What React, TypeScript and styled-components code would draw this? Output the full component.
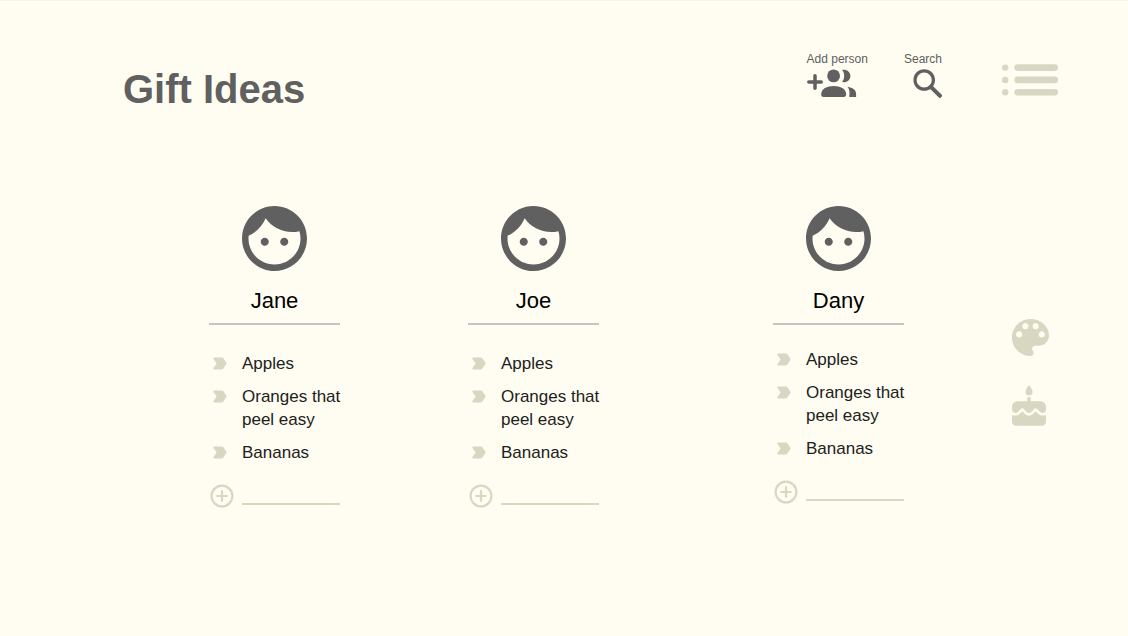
import React from 'react';
import styled, { createGlobalStyle } from 'styled-components';

const colors = {
  paper: '#fffdf1',
  edge: '#f7f5ea',
  ink: '#606060',
  soft: '#d8d8c2',
  rule: '#c4c4c4',
};

const GlobalStyle = createGlobalStyle`
  * { box-sizing: border-box; }
  body {
    margin: 0;
    background: ${colors.paper};
    font-family: "Liberation Sans", Arial, sans-serif;
  }
`;

const Page = styled.div`
  min-height: 100vh;
  border-top: 1px solid ${colors.edge};
  background: ${colors.paper};
`;

const Header = styled.header`
  display: flex;
  justify-content: space-between;
  align-items: flex-start;
  padding: 51px 70px 0 123px;
`;

const Title = styled.h1`
  margin: 14px 0 1px;
  font-size: 40px;
  line-height: 46px;
  font-weight: 700;
  color: ${colors.ink};
`;

const Toolbar = styled.nav`
  display: flex;
  align-items: flex-start;
  gap: 36px;
`;

const PlainButton = styled.button`
  display: block;
  padding: 0;
  border: 0;
  background: none;
  color: ${colors.soft};
  font: inherit;
  cursor: pointer;
  svg { display: block; }
`;

const ToolButton = styled(PlainButton)<{ $align: string }>`
  display: flex;
  flex-direction: column;
  align-items: ${(p) => p.$align};
  gap: 3px;
  color: ${colors.ink};
  font-size: 12px;
  line-height: 14px;
`;

const MenuButton = styled(PlainButton)`
  margin: 12px 0 0 24px;
`;

const Main = styled.main`
  display: grid;
  grid-template-columns: 259fr 305fr 239fr 116fr;
  align-items: start;
  padding: 93px 0 40px 209px;
`;

const Card = styled.section`
  width: 131px;
`;

const CardHead = styled.div`
  display: flex;
  flex-direction: column;
  align-items: center;
  gap: 17px;
  padding-bottom: 9px;
  border-bottom: 2px solid ${colors.rule};
  color: ${colors.ink};
`;

const Name = styled.h2`
  margin: 0;
  font-size: 22px;
  line-height: 26px;
  font-weight: 400;
  color: #000;
`;

const Ideas = styled.ul<{ $compact?: boolean }>`
  display: flex;
  flex-direction: column;
  gap: 10px;
  margin: ${(p) => (p.$compact ? 23 : 27)}px 0 0;
  padding: 0 0 0 4px;
  list-style: none;
`;

const Idea = styled.li`
  display: flex;
  align-items: flex-start;
  gap: 15px;
  font-size: 17px;
  line-height: 23px;
  color: #212121;
  svg {
    flex: none;
    margin-top: 5px;
    color: ${colors.soft};
  }
`;

const IdeaText = styled.span`
  flex: none;
  width: 104px;
`;

const AddRow = styled.form`
  display: flex;
  align-items: center;
  gap: 8px;
  margin-top: 20px;
  padding-left: 1px;
`;

const AddInput = styled.input`
  flex: 1;
  min-width: 0;
  height: 18px;
  padding: 0;
  border: 0;
  border-bottom: 2px solid ${colors.soft};
  border-radius: 0;
  outline: 0;
  background: none;
  font: inherit;
`;

const SideTools = styled.aside`
  display: flex;
  flex-direction: column;
  align-items: flex-start;
  gap: 29px;
  padding-top: 113px;
`;

const GroupAddIcon = () => (
  <svg width="50" height="28" viewBox="0 0 50 28" fill="currentColor" aria-hidden="true">
    <path d="M8 6.800v12.400M1.800 13h12.400" stroke="currentColor" strokeWidth="3.500" strokeLinecap="round" />
    <circle cx="26.600" cy="6.900" r="6.400" />
    <path d="M14.200 25.200c0-5.500 5.800-8.300 12.500-8.300s12.400 2.800 12.400 8.300c0 1.700-.8 2.800-2.200 2.800H16.400c-1.400 0-2.200-1.100-2.200-2.800z" />
    <path d="M35 .8c4.600-.9 8.400 2 8.400 6.100s-3.800 7-8.400 6.100c2.900-3.300 2.900-8.900 0-12.200z" />
    <path d="M40.400 17.700c5.400.8 8.700 3.300 8.700 7V28h-6.900c.6-4.400.6-7.300-1.800-10.300z" />
  </svg>
);

const SearchIcon = () => (
  <svg width="29" height="29" viewBox="0 0 29 29" fill="none" stroke="currentColor" aria-hidden="true">
    <circle cx="11.200" cy="11" r="9.200" strokeWidth="3.200" />
    <path d="M18 18l8.800 8.600" strokeWidth="4" strokeLinecap="square" />
  </svg>
);

const MenuIcon = () => (
  <svg width="56" height="32" viewBox="0 0 56 32" fill="currentColor" aria-hidden="true">
    {[3.6, 15.9, 28.2].map((y) => (
      <g key={y}>
        <circle cx="3.200" cy={y} r="3.200" />
        <rect x="12.400" y={y - 3.3} width="43.600" height="6.600" rx="3.300" />
      </g>
    ))}
  </svg>
);

const FaceIcon = () => (
  <svg width="65" height="65" viewBox="2 2 20 20" fill="currentColor" aria-hidden="true">
    <path d="M9 11.750c-.69 0-1.250.56-1.250 1.250s.56 1.250 1.250 1.250 1.250-.56 1.250-1.250-.56-1.250-1.250-1.250zm6 0c-.69 0-1.250.56-1.250 1.250s.56 1.250 1.250 1.250 1.250-.56 1.250-1.250-.56-1.250-1.250-1.250zM12 2C6.480 2 2 6.480 2 12s4.480 10 10 10 10-4.480 10-10S17.520 2 12 2zm0 18c-4.410 0-8-3.590-8-8 0-.29.02-.58.05-.86 2.360-1.050 4.230-2.980 5.210-5.370C11.070 8.330 14.050 10 17.420 10c.78 0 1.530-.09 2.250-.26.21.71.33 1.470.33 2.260 0 4.410-3.590 8-8 8z" />
  </svg>
);

const BulletIcon = () => (
  <svg width="14" height="13" viewBox="0 0 14 13" fill="currentColor" aria-hidden="true">
    <path d="M1.300.5h7.500c.7 0 1.200.3 1.600.8l3 4.500c.3.400.3.900 0 1.300l-3 4.500c-.4.500-.9.800-1.600.8H1.300c-.9 0-1.300-.8-.8-1.500L3.600 6.500.5 2C0 1.300.4.500 1.300.5z" />
  </svg>
);

const PlusIcon = () => (
  <svg width="24" height="24" viewBox="0 0 24 24" fill="none" stroke="currentColor" strokeWidth="2.200" strokeLinecap="round" aria-hidden="true">
    <circle cx="12" cy="12" r="10.400" />
    <path d="M12 7.200v9.600M7.200 12h9.600" />
  </svg>
);

const PaletteIcon = () => (
  <svg width="37" height="37" viewBox="3 3 18 18" fill="currentColor" aria-hidden="true">
    <path d="M12 3c-4.970 0-9 4.030-9 9s4.030 9 9 9c.83 0 1.500-.67 1.500-1.500 0-.39-.15-.74-.39-1.010-.23-.26-.38-.61-.38-.99 0-.83.67-1.500 1.500-1.500H16c2.760 0 5-2.240 5-5 0-4.420-4.030-8-9-8zm-5.500 9c-.83 0-1.500-.67-1.500-1.500S5.670 9 6.500 9 8 9.670 8 10.500 7.330 12 6.500 12zm3-4C8.670 8 8 7.330 8 6.500S8.670 5 9.500 5s1.500.67 1.500 1.500S10.330 8 9.500 8zm5 0c-.83 0-1.500-.67-1.500-1.500S13.670 5 14.500 5s1.500.67 1.500 1.500S15.330 8 14.500 8zm3 4c-.83 0-1.500-.67-1.500-1.500S16.670 9 17.500 9s1.500.67 1.500 1.500-.67 1.500-1.500 1.500z" />
  </svg>
);

const CakeIcon = () => (
  <svg width="34" height="41" viewBox="0 0 34 41" fill="currentColor" aria-hidden="true">
    <path d="M17 0c1.400 2 3.600 4.600 3.600 7 0 2-1.600 3.500-3.600 3.500S13.400 9 13.400 7c0-2.400 2.200-5 3.600-7z" />
    <path d="M15.300 16.200v-2.400c0-1 .7-1.700 1.700-1.700s1.700.7 1.700 1.700v2.400H28c3.700 0 6 2.300 6 5.700v2.500c0 2-1.600 3.500-3.500 3.500-1 0-1.900-.4-2.600-1.100l-3-3c-.8-.8-1.800-.8-2.600 0l-2.700 2.900c-1.500 1.600-3.700 1.600-5.200 0l-2.700-2.900c-.8-.8-1.800-.8-2.600 0l-3 3c-.7.7-1.600 1.100-2.600 1.100C1.600 27.900 0 26.400 0 24.400v-2.500c0-3.400 2.300-5.700 6-5.700z" />
    <path d="M0 29.900c2.800 1.200 5.700.8 7.800-1.200l2.600-2.500 2.400 2.500c2.300 2.400 6.100 2.400 8.400 0l2.400-2.500 2.600 2.500c2.100 2 5 2.400 7.800 1.200v6.900c0 2.400-1.600 3.900-4 3.900H4c-2.400 0-4-1.500-4-3.900z" />
  </svg>
);

const people = [
  { name: 'Jane', compact: false },
  { name: 'Joe', compact: false },
  { name: 'Dany', compact: true },
];

const ideas = ['Apples', 'Oranges that peel easy', 'Bananas'];

export default function App() {
  return (
    <>
      <GlobalStyle />
      <Page>
        <Header>
          <Title>Gift Ideas</Title>
          <Toolbar>
            <ToolButton type="button" $align="flex-start">
              Add person
              <GroupAddIcon />
            </ToolButton>
            <ToolButton type="button" $align="flex-end">
              Search
              <SearchIcon />
            </ToolButton>
            <MenuButton type="button" aria-label="Menu">
              <MenuIcon />
            </MenuButton>
          </Toolbar>
        </Header>
        <Main>
          {people.map(({ name, compact }) => (
            <Card key={name}>
              <CardHead>
                <FaceIcon />
                <Name>{name}</Name>
              </CardHead>
              <Ideas $compact={compact}>
                {ideas.map((idea) => (
                  <Idea key={idea}>
                    <BulletIcon />
                    <IdeaText>{idea}</IdeaText>
                  </Idea>
                ))}
              </Ideas>
              <AddRow onSubmit={(e) => e.preventDefault()}>
                <PlainButton type="submit" aria-label={`Add idea for ${name}`}>
                  <PlusIcon />
                </PlainButton>
                <AddInput type="text" aria-label={`New idea for ${name}`} />
              </AddRow>
            </Card>
          ))}
          <SideTools>
            <PlainButton type="button" aria-label="Theme">
              <PaletteIcon />
            </PlainButton>
            <PlainButton type="button" aria-label="Birthdays">
              <CakeIcon />
            </PlainButton>
          </SideTools>
        </Main>
      </Page>
    </>
  );
}
